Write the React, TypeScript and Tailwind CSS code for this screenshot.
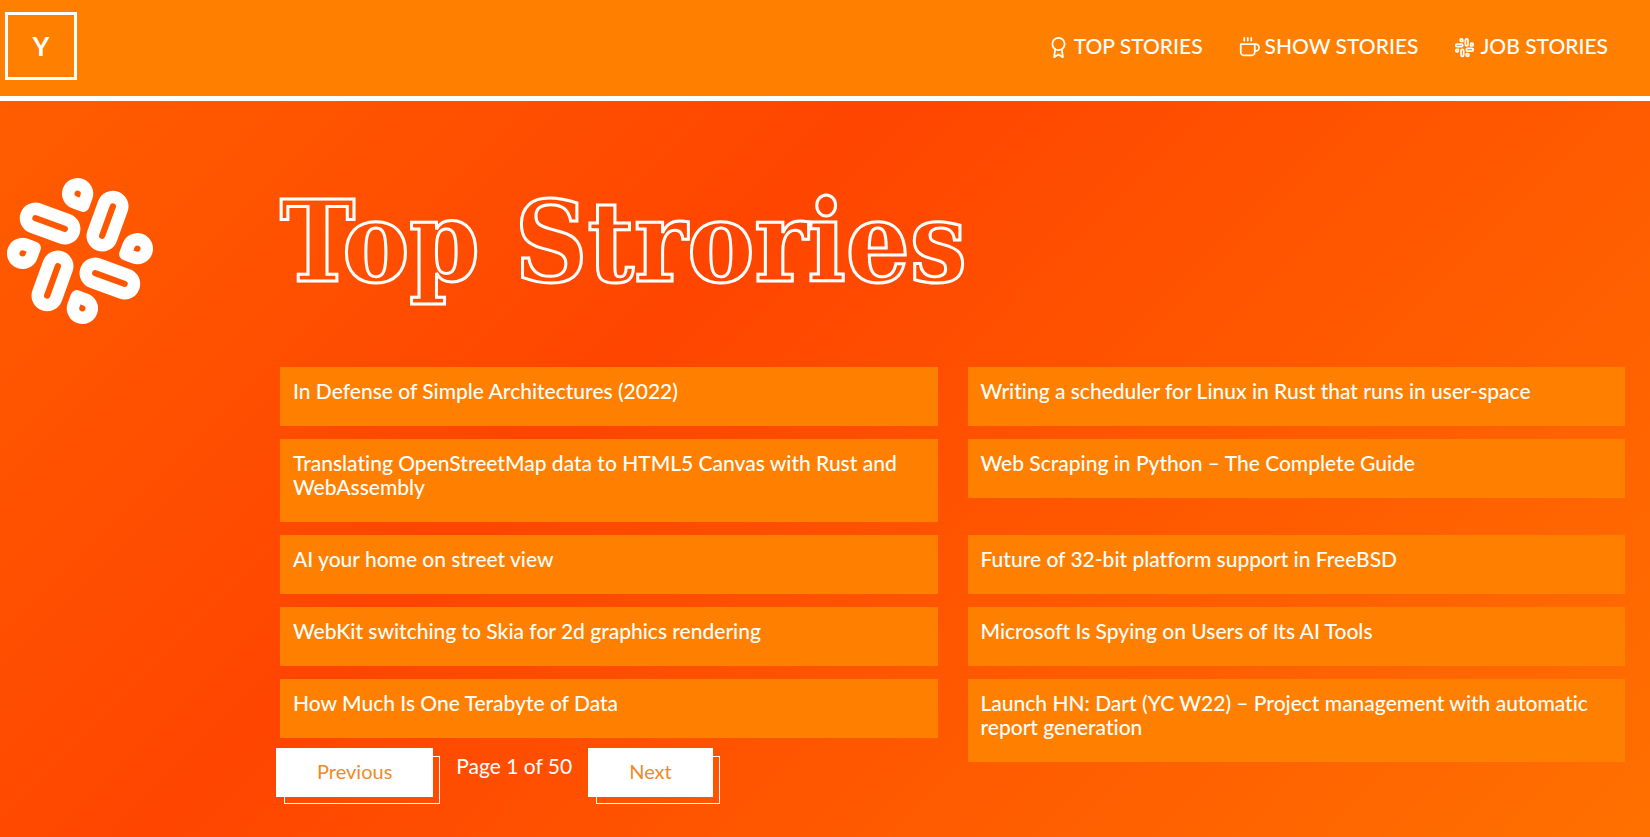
import type { IconType } from "react-icons";
import { FiAward, FiCoffee, FiSlack } from "react-icons/fi";

const links: { label: string; icon: IconType }[] = [
  { label: "TOP STORIES", icon: FiAward },
  { label: "SHOW STORIES", icon: FiCoffee },
  { label: "JOB STORIES", icon: FiSlack },
];

const stories = [
  "In Defense of Simple Architectures (2022)",
  "Writing a scheduler for Linux in Rust that runs in user-space",
  "Translating OpenStreetMap data to HTML5 Canvas with Rust and WebAssembly",
  "Web Scraping in Python – The Complete Guide",
  "AI your home on street view",
  "Future of 32-bit platform support in FreeBSD",
  "WebKit switching to Skia for 2d graphics rendering",
  "Microsoft Is Spying on Users of Its AI Tools",
  "How Much Is One Terabyte of Data",
  "Launch HN: Dart (YC W22) – Project management with automatic report generation",
];

function Header() {
  return (
    <header className="flex items-center justify-between border-b-5 border-white bg-[#ff8000] pt-3 pr-[42px] pb-4 pl-[5px]">
      <a
        href="#"
        className="flex h-[68px] w-[72px] items-center justify-center border-3 border-white text-[26px] font-bold"
      >
        Y
      </a>
      <nav className="flex flex-wrap gap-9">
        {links.map(({ label, icon: Icon }) => (
          <a key={label} href="#" className="flex items-center gap-[5px]">
            <Icon className="mt-[3px] size-[21px] shrink-0" aria-hidden="true" />
            <span>{label}</span>
          </a>
        ))}
      </nav>
    </header>
  );
}

function PageButton({ label }: { label: string }) {
  return (
    <button
      type="button"
      className="relative h-[49px] bg-white px-[41px] pb-[3px] text-xl font-normal text-[#f08a24] after:absolute after:top-2 after:-right-[7px] after:-bottom-[7px] after:left-2 after:-z-10 after:border after:border-white"
    >
      {label}
    </button>
  );
}

export default function App() {
  return (
    <div className="flex min-h-screen flex-col font-[Lato,sans-serif] text-[21px] leading-6 font-medium text-white [font-variant-ligatures:none]">
      <Header />
      <div className="isolate flex grow bg-[linear-gradient(135deg,#ff5d00_0%,#ff4500_37%,#ff7000_100%)] pr-[25px] pb-8">
        <aside className="w-[280px] shrink-0 pt-[75px] pl-[5px]">
          <FiSlack className="size-[150px] rotate-20" aria-hidden="true" />
        </aside>
        <main className="min-w-0 grow pt-[85px]">
          <h1 className="mb-[69px] font-['DejaVu_Serif_Condensed','DejaVu_Serif',serif] text-[112px] leading-none font-bold text-transparent [-webkit-text-stroke:3px_white]">
            Top Strories
          </h1>
          <ul className="grid grid-cols-2 items-start gap-x-[30px] gap-y-[13px]">
            {stories.map((title) => (
              <li key={title}>
                <a href="#" className="block bg-[#ff8000] px-[13px] pt-3 pb-[23px]">
                  {title}
                </a>
              </li>
            ))}
          </ul>
          <div className="-mt-[14px] -ml-1 flex items-start">
            <PageButton label="Previous" />
            <span className="mt-[6px] mr-4 ml-[23px] font-normal">Page 1 of 50</span>
            <PageButton label="Next" />
          </div>
        </main>
      </div>
    </div>
  );
}
